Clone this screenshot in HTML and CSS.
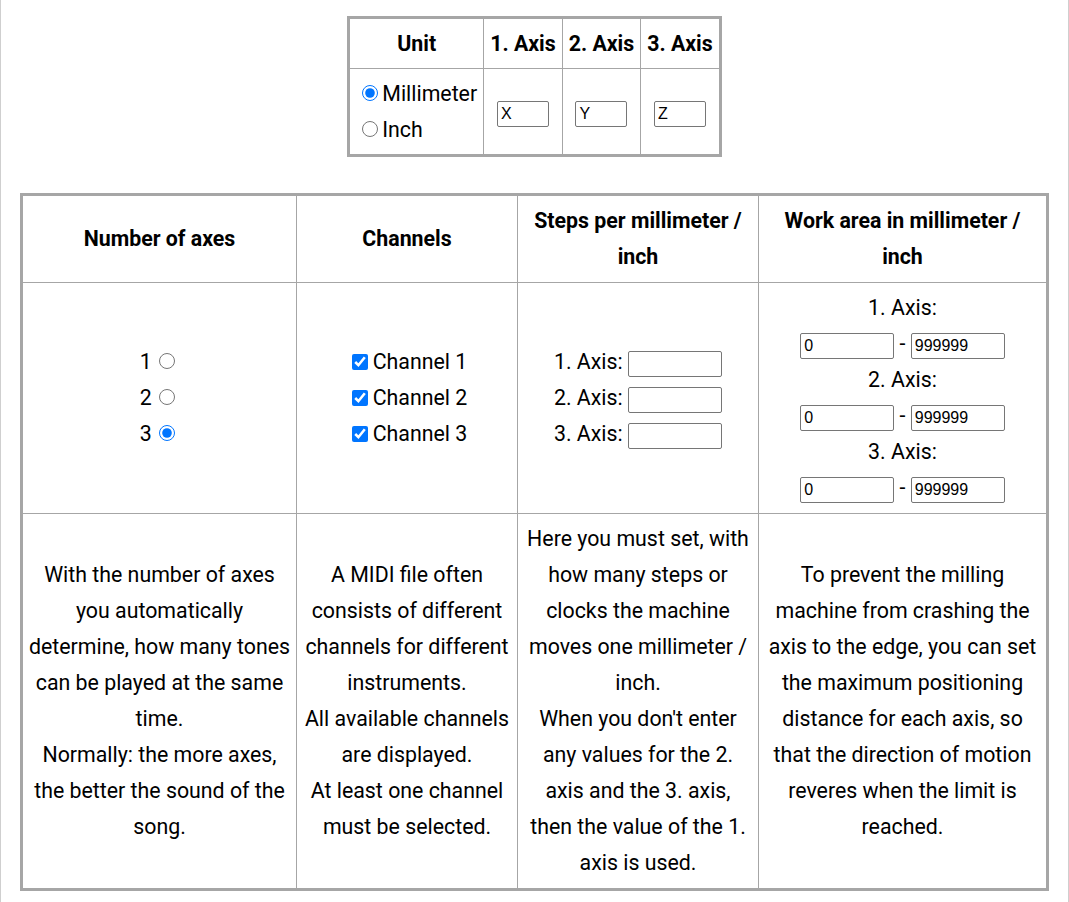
FILE: index.html
```html
<!DOCTYPE html>
<html lang="en">
<head>
<meta charset="utf-8">
<title>MIDI settings</title>
<link rel="stylesheet" href="styles.css">
</head>
<body>
<div class="page">
  <table class="grid unit-table">
    <tr>
      <th>Unit</th>
      <th>1. Axis</th>
      <th>2. Axis</th>
      <th>3. Axis</th>
    </tr>
    <tr>
      <td class="left"><input type="radio" name="unit" class="radio" checked>Millimeter<br><input type="radio" name="unit" class="radio">Inch</td>
      <td><input type="text" class="field small" value="X"></td>
      <td><input type="text" class="field small" value="Y"></td>
      <td><input type="text" class="field small" value="Z"></td>
    </tr>
  </table>

  <table class="grid main-table">
    <tr>
      <th class="c1">Number of axes</th>
      <th class="c2">Channels</th>
      <th class="c3">Steps per millimeter / inch</th>
      <th class="c4">Work area in millimeter / inch</th>
    </tr>
    <tr>
      <td>1 <input type="radio" name="axes" class="radio after"><br>2 <input type="radio" name="axes" class="radio after"><br>3 <input type="radio" name="axes" class="radio after" checked></td>
      <td><input type="checkbox" class="check" checked>Channel 1<br><input type="checkbox" class="check" checked>Channel 2<br><input type="checkbox" class="check" checked>Channel 3</td>
      <td>1. Axis: <input type="text" class="field wide"><br>2. Axis: <input type="text" class="field wide"><br>3. Axis: <input type="text" class="field wide"></td>
      <td>1. Axis:<br><input type="text" class="field wide" value="0"> - <input type="text" class="field wide" value="999999"><br>2. Axis:<br><input type="text" class="field wide" value="0"> - <input type="text" class="field wide" value="999999"><br>3. Axis:<br><input type="text" class="field wide" value="0"> - <input type="text" class="field wide" value="999999"></td>
    </tr>
    <tr>
      <td>With the number of axes you automatically determine, how many tones can be played at the same time.<br>Normally: the more axes, the better the sound of the song.</td>
      <td>A MIDI file often consists of different channels for different instruments.<br>All available channels are displayed.<br>At least one channel must be selected.</td>
      <td>Here you must set, with how many steps or clocks the machine moves one millimeter / inch.<br>When you don't enter any values for the 2. axis and the 3. axis, then the value of the 1. axis is used.</td>
      <td>To prevent the milling machine from crashing the axis to the edge, you can set the maximum positioning distance for each axis, so that the direction of motion reveres when the limit is reached.</td>
    </tr>
  </table>
</div>
</body>
</html>
```

FILE: styles.css
```css
html, body {
  margin: 0;
  padding: 0;
  background: #fff;
}

.page {
  min-height: 100vh;
  box-sizing: border-box;
  border-left: 1px solid #cfcfcf;
  border-right: 1px solid #cfcfcf;
  padding: 16px 19px 0;
  font-family: Roboto, "Liberation Sans", sans-serif;
  font-size: 21.33px;
  line-height: 36px;
  color: #000;
}

.grid {
  border-collapse: separate;
  border-spacing: 0;
  border: 3px solid #a6a6a6;
}

.grid th,
.grid td {
  box-sizing: border-box;
  padding: 6.5px 6px;
  text-align: center;
  vertical-align: middle;
  border-left: 1px solid #a6a6a6;
  border-top: 1px solid #a6a6a6;
}

.main-table th,
.main-table td {
  padding: 7px 6px;
}

.main-table td:first-child {
  padding-left: 3px;
  padding-right: 3px;
}

.grid th {
  font-weight: bold;
}

.grid tr > :first-child {
  border-left: none;
}

.grid tr:first-child > * {
  border-top: none;
}

.grid td.left {
  text-align: left;
}

.unit-table {
  margin: 0 auto 36px;
}

.main-table {
  width: 100%;
  table-layout: fixed;
}

.c1 { width: 273px; }
.c2 { width: 221px; }
.c3 { width: 241px; }
.c4 { width: 288px; }

.radio {
  width: 16px;
  height: 16px;
  margin: 4px 4px 0 6px;
}

.radio.after {
  margin-left: 2px;
}

.check {
  width: 16px;
  height: 16px;
  margin: 4px 5px 4px 5px;
  vertical-align: -1px;
}

.field {
  box-sizing: border-box;
  height: 26px;
  padding: 0 3px;
  border: 1px solid #767676;
  border-radius: 2px;
  font-family: "Liberation Sans", Arial, sans-serif;
  font-size: 16px;
  color: #000;
  background: #fff;
}

.small { width: 52px; }
.wide { width: 94px; }
```
